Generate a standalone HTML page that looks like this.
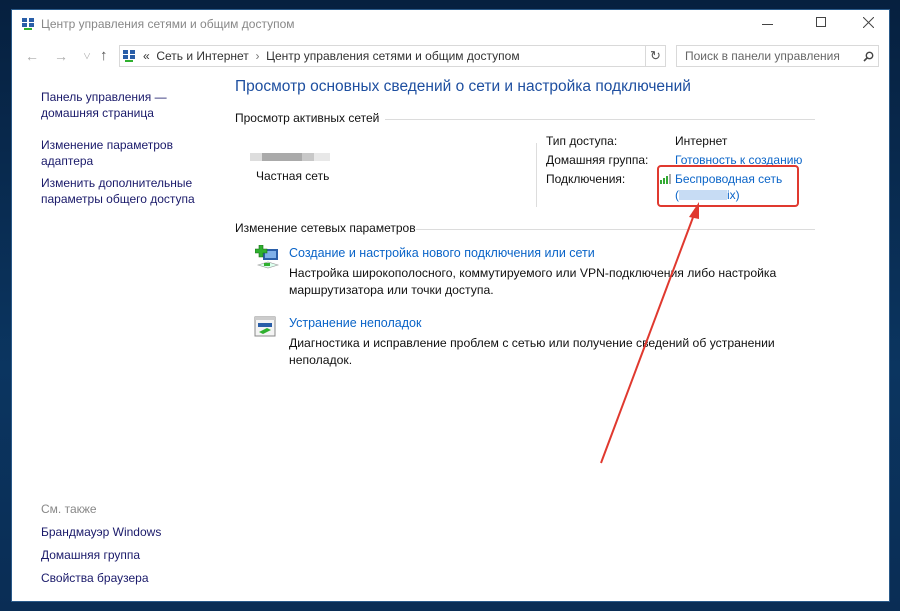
<!DOCTYPE html>
<html><head><meta charset="utf-8"><style>
*{margin:0;padding:0;box-sizing:border-box}
body{width:900px;height:611px;overflow:hidden;background:linear-gradient(180deg,#06203f 0%,#0b3560 60%,#0a2d55 100%);font-family:"Liberation Sans","Noto Sans CJK SC",sans-serif;font-size:12px;position:relative}
.win{position:absolute;left:11px;top:9px;width:879px;height:593px;background:#fff;border:1px solid #2a5a8a}
.a{position:absolute;white-space:nowrap}
.nav{color:#1a1a6a;line-height:16px}
.lnk{color:#0a64c8}
.g{color:#999}
.hl{position:absolute;height:1px;background:#dcdcdc}
</style></head><body>
<div class="win">
<svg class="a" style="left:9px;top:7px" width="14" height="14"><rect x="1" y="1" width="5" height="4" fill="#2a5ea8"/><rect x="8" y="1" width="5" height="4" fill="#2a5ea8"/><rect x="1" y="6" width="5" height="4" fill="#2a5ea8"/><rect x="8" y="6" width="5" height="4" fill="#2a5ea8"/><rect x="3" y="11" width="8" height="2" fill="#2fb02f"/></svg>
<div class="a g" style="left:29px;top:7px;font-size:12px;color:#888">Центр управления сетями и общим доступом</div>
<div class="a" style="left:750px;top:14px;width:11px;height:1px;background:#444"></div>
<div class="a" style="left:804px;top:7px;width:10px;height:10px;border:1px solid #444"></div>
<svg class="a" style="left:851px;top:7px" width="11" height="11"><path d="M0 0L11 11M11 0L0 11" stroke="#444" stroke-width="1"/></svg>
<div class="a" style="left:13px;top:38px;color:#aaa;font-size:14px">←</div>
<div class="a" style="left:42px;top:38px;color:#aaa;font-size:14px">→</div>
<div class="a" style="left:71px;top:41px;color:#aaa;font-size:8px">∨</div>
<div class="a" style="left:88px;top:37px;color:#555;font-size:15px">↑</div>
<div class="a" style="left:107px;top:35px;width:547px;height:22px;border:1px solid #d9d9d9"></div>
<svg class="a" style="left:110px;top:39px" width="14" height="14"><rect x="1" y="1" width="5" height="4" fill="#2a5ea8"/><rect x="8" y="1" width="5" height="4" fill="#2a5ea8"/><rect x="1" y="6" width="5" height="4" fill="#2a5ea8"/><rect x="8" y="6" width="5" height="4" fill="#2a5ea8"/><rect x="3" y="11" width="8" height="2" fill="#2fb02f"/></svg>
<div class="a" style="left:131px;top:39px;color:#333;font-size:12px">«&nbsp;&nbsp;Сеть и Интернет&nbsp;&nbsp;<span style="color:#777">›</span>&nbsp;&nbsp;Центр управления сетями и общим доступом</div>
<div class="a" style="left:633px;top:35px;width:21px;height:22px;border:1px solid #d9d9d9;color:#555;font-size:13px;text-align:center;line-height:20px">↻</div>
<div class="a" style="left:664px;top:35px;width:203px;height:22px;border:1px solid #d9d9d9"></div>
<div class="a" style="left:673px;top:39px;color:#666">Поиск в панели управления</div>
<svg class="a" style="left:851px;top:41px" width="11" height="11"><circle cx="6.5" cy="4.5" r="3.2" stroke="#444" stroke-width="1.4" fill="none"/><path d="M4.3 6.7L1 10" stroke="#444" stroke-width="1.6"/></svg>
<div class="a nav" style="left:29px;top:79px">Панель управления —<br>домашняя страница</div>
<div class="a nav" style="left:29px;top:127px">Изменение параметров<br>адаптера</div>
<div class="a nav" style="left:29px;top:165px">Изменить дополнительные<br>параметры общего доступа</div>
<div class="a" style="left:29px;top:492px;color:#888">См. также</div>
<div class="a nav" style="left:29px;top:514px">Брандмауэр Windows</div>
<div class="a nav" style="left:29px;top:537px">Домашняя группа</div>
<div class="a nav" style="left:29px;top:560px">Свойства браузера</div>
<div class="a" style="left:223px;top:68px;font-size:15.5px;color:#1e4fa0">Просмотр основных сведений о сети и настройка подключений</div>
<div class="a" style="left:223px;top:101px;color:#111">Просмотр активных сетей</div>
<div class="hl" style="left:373px;top:109px;width:430px"></div>
<div class="a" style="left:238px;top:143px;width:80px;height:8px;background:linear-gradient(90deg,#ddd 0 15%,#aaa 15% 65%,#c8c8c8 65% 80%,#e8e8e8 80%)"></div>
<div class="a" style="left:244px;top:159px;color:#111">Частная сеть</div>
<div class="a" style="left:524px;top:133px;width:1px;height:64px;background:#ddd"></div>
<div class="a" style="left:534px;top:124px;color:#111">Тип доступа:</div>
<div class="a" style="left:534px;top:143px;color:#111">Домашняя группа:</div>
<div class="a" style="left:534px;top:162px;color:#111">Подключения:</div>
<div class="a" style="left:663px;top:124px;color:#111">Интернет</div>
<div class="a lnk" style="left:663px;top:143px">Готовность к созданию</div>
<svg class="a" style="left:647px;top:163px" width="12" height="11"><rect x="1" y="7" width="2" height="4" fill="#3a3"/><rect x="4" y="5" width="2" height="6" fill="#3a3"/><rect x="7" y="3" width="2" height="8" fill="#3a3"/><rect x="10" y="1" width="2" height="10" fill="#aaa"/></svg>
<div class="a lnk" style="left:663px;top:162px">Беспроводная сеть</div>
<div class="a lnk" style="left:663px;top:178px">(<span style="display:inline-block;width:48px;height:10px;background:#c7dcf4;vertical-align:-1px"></span>ix)</div>
<div class="a" style="left:645px;top:155px;width:142px;height:42px;border:2px solid #e0392f;border-radius:4px"></div>
<div class="a" style="left:223px;top:211px;color:#111">Изменение сетевых параметров</div>
<div class="hl" style="left:404px;top:219px;width:399px"></div>
<svg class="a" style="left:243px;top:235px" width="26" height="26"><rect x="8" y="4" width="15" height="11" fill="#2a5ea8"/><rect x="10" y="6" width="11" height="7" fill="#7fb0e8"/><path d="M4 0h4v4h4v4h-4v4h-4v-4h-4v-4h4z" fill="#2fb02f" stroke="#1a6a1a" stroke-width=".6"/><path d="M3 20l10 -3l10 3l-10 3z" fill="#dfe" stroke="#999" stroke-width=".6"/><rect x="9" y="18" width="6" height="3" fill="#2fb02f"/></svg>
<div class="a lnk" style="left:277px;top:236px;font-size:12.5px">Создание и настройка нового подключения или сети</div>
<div class="a" style="left:277px;top:255px;color:#111;line-height:17px;font-size:12.2px">Настройка широкополосного, коммутируемого или VPN-подключения либо настройка<br>маршрутизатора или точки доступа.</div>
<svg class="a" style="left:242px;top:306px" width="24" height="22"><rect x="1" y="1" width="20" height="19" fill="#f4f4f4" stroke="#888"/><rect x="1" y="1" width="20" height="3" fill="#ccc"/><rect x="4" y="7" width="14" height="4" fill="#2a5ea8"/><path d="M5 16l8 -4l4 2l-8 4z" fill="#2fb02f"/></svg>
<div class="a lnk" style="left:277px;top:306px;font-size:12.5px">Устранение неполадок</div>
<div class="a" style="left:277px;top:325px;color:#111;line-height:17px;font-size:12.2px">Диагностика и исправление проблем с сетью или получение сведений об устранении<br>неполадок.</div>
</div>
<svg class="a" style="left:0;top:0;pointer-events:none" width="900" height="611"><path d="M601 463L695 212" stroke="#e0392f" stroke-width="2"/><path d="M699 202L689 217L699 219Z" fill="#e0392f"/></svg>
</body></html>
